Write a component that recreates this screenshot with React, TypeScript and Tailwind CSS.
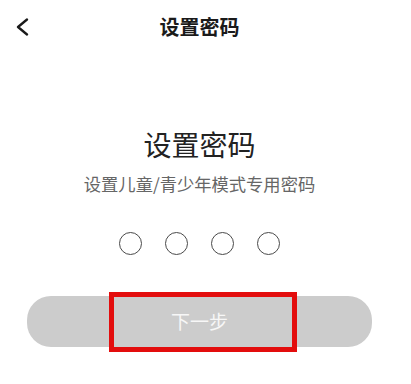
import React from "react";

export default function App() {
  const font = { fontFamily: '"Noto Sans CJK SC", "Noto Sans", sans-serif' };
  return (
    <div className="w-[411px] h-[384px] bg-white overflow-hidden" style={font}>
      <div className="w-[399px] flex flex-col items-center">
        <div className="w-full h-[53px] grid grid-cols-[1fr_auto_1fr] items-center">
          <div className="pl-[15px] flex items-center">
            <svg width="14" height="18" viewBox="0 0 14 18" fill="none">
              <path d="M12 1.5 L3 9 L12 16.5" stroke="#1a1a1a" strokeWidth="2.3" strokeLinecap="round" strokeLinejoin="round" />
            </svg>
          </div>
          <div className="text-[20px] leading-[28px] font-bold text-[#1a1a1a]">设置密码</div>
          <div />
        </div>
        <div className="mt-[73px] text-[28px] leading-[36px] text-[#222]">设置密码</div>
        <div className="mt-[10px] text-[17.3px] leading-[24px] text-[#666]">设置儿童/青少年模式专用密码</div>
        <div className="mt-[36px] flex gap-[23px]">
          <div className="w-[23px] h-[23px] rounded-full border-[1.6px] border-[#4a4a4a]" />
          <div className="w-[23px] h-[23px] rounded-full border-[1.6px] border-[#4a4a4a]" />
          <div className="w-[23px] h-[23px] rounded-full border-[1.6px] border-[#4a4a4a]" />
          <div className="w-[23px] h-[23px] rounded-full border-[1.6px] border-[#4a4a4a]" />
        </div>
        <div className="relative mt-[41px] w-[345px] h-[51px] rounded-[24px] bg-[#cccccc] flex items-center justify-center">
          <span className="text-[19px] text-[#f7f7f7]">下一步</span>
          <div className="absolute left-[82px] top-[-4px] w-[188px] h-[60px] border-[5px] border-[#e30d0d]" />
        </div>
      </div>
    </div>
  );
}
